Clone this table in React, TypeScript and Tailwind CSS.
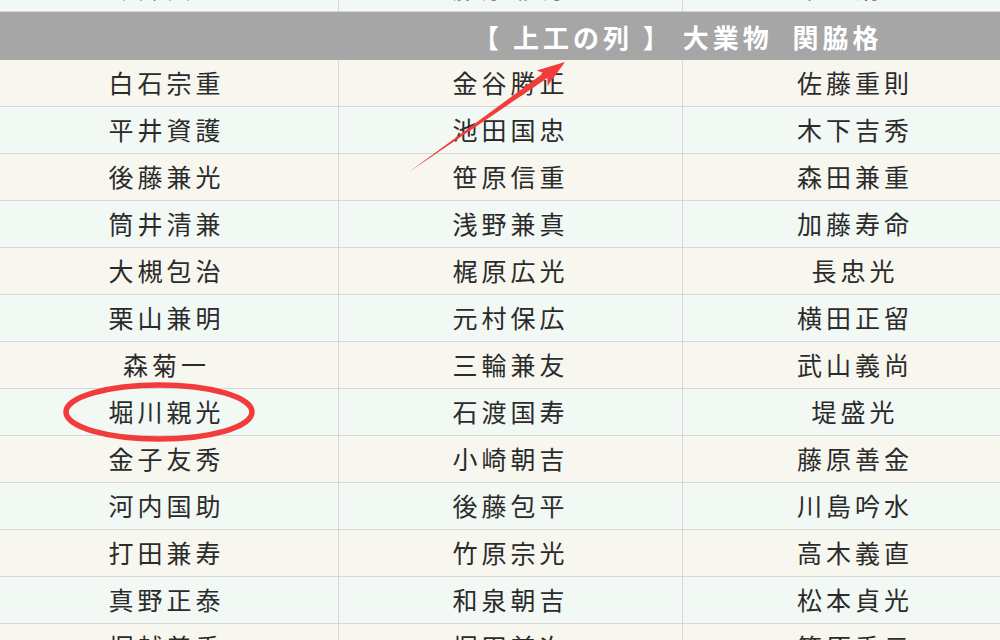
import React from 'react';

const rows: string[][] = [
  ['白石宗重', '金谷勝正', '佐藤重則'],
  ['平井資護', '池田国忠', '木下吉秀'],
  ['後藤兼光', '笹原信重', '森田兼重'],
  ['筒井清兼', '浅野兼真', '加藤寿命'],
  ['大槻包治', '梶原広光', '長忠光'],
  ['栗山兼明', '元村保広', '横田正留'],
  ['森菊一', '三輪兼友', '武山義尚'],
  ['堀川親光', '石渡国寿', '堤盛光'],
  ['金子友秀', '小崎朝吉', '藤原善金'],
  ['河内国助', '後藤包平', '川島吟水'],
  ['打田兼寿', '竹原宗光', '高木義直'],
  ['真野正泰', '和泉朝吉', '松本貞光'],
  ['堀越義秀', '堀田兼次', '篠原秀元'],
];

const font = { fontFamily: '"Noto Sans CJK JP", "Noto Sans", sans-serif' };

const Row = ({ names, idx }: { names: string[]; idx: number }) => (
  <div
    className={`grid grid-cols-[344px_344px_344px] h-[47px] border-b border-[#d7d7d7] ${
      idx % 2 === 0 ? 'bg-[#f7f6ef]' : 'bg-[#f2f8f4]'
    }`}
  >
    {names.map((n, i) => (
      <div
        key={i}
        className={`flex items-center justify-center text-[25px] tracking-[4px] text-[#2b2b2b] ${
          i < 2 ? 'border-r border-[#d7d7d7]' : ''
        }`}
      >
        {n}
      </div>
    ))}
  </div>
);

const App = () => {
  return (
    <div className="relative w-[1000px] h-[640px] overflow-hidden bg-white" style={font}>
      <div className="w-[1034px] -ml-[5px] -mt-[35px]">
        <Row names={['今井貞光', '藤原兼房', '木村清則']} idx={1} />
        <div className="h-[48px] bg-[#a6a6a6] flex items-center pl-[478px] text-white font-bold text-[26px] tracking-[4px] whitespace-pre">
          【 上工の列 】 大業物  関脇格
        </div>
        {rows.map((r, i) => (
          <Row key={i} names={r} idx={i} />
        ))}
      </div>

      <svg className="absolute inset-0 pointer-events-none" width="1000" height="640">
        <polygon
          points="409,172 547.4,78.1 547.6,86 565,62 536.6,70.4 543.4,73.1"
          fill="#f23b3b"
        />
        <ellipse cx="159" cy="412" rx="93" ry="27" fill="none" stroke="#f23b3b" strokeWidth="5.5" />
      </svg>
    </div>
  );
};

export default App;
